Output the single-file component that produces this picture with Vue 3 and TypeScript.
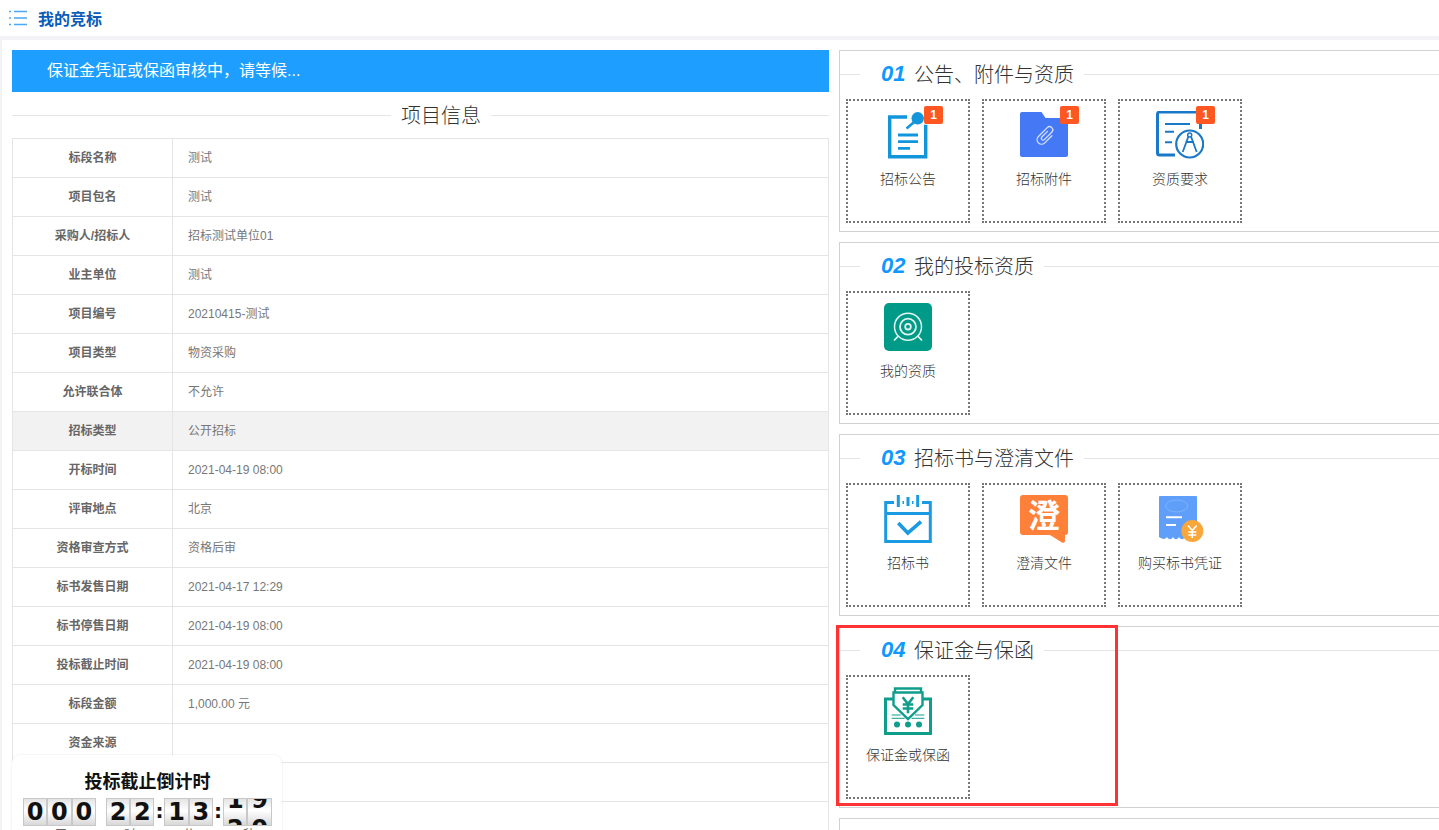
<script setup lang="ts">
interface Card { key: string; label: string; badge?: number }
interface Section { no: string; title: string; cards: Card[] }

const rows: [string, string][] = [
  ['标段名称', '测试'],
  ['项目包名', '测试'],
  ['采购人/招标人', '招标测试单位01'],
  ['业主单位', '测试'],
  ['项目编号', '20210415-测试'],
  ['项目类型', '物资采购'],
  ['允许联合体', '不允许'],
  ['招标类型', '公开招标'],
  ['开标时间', '2021-04-19 08:00'],
  ['评审地点', '北京'],
  ['资格审查方式', '资格后审'],
  ['标书发售日期', '2021-04-17 12:29'],
  ['标书停售日期', '2021-04-19 08:00'],
  ['投标截止时间', '2021-04-19 08:00'],
  ['标段金额', '1,000.00 元'],
  ['资金来源', ''],
  ['', ''],
  ['', ''],
]

const sections: Section[] = [
  {
    no: '01',
    title: '公告、附件与资质',
    cards: [
      { key: 'notice', label: '招标公告', badge: 1 },
      { key: 'attach', label: '招标附件', badge: 1 },
      { key: 'qualify', label: '资质要求', badge: 1 },
    ],
  },
  { no: '02', title: '我的投标资质', cards: [{ key: 'target', label: '我的资质' }] },
  {
    no: '03',
    title: '招标书与澄清文件',
    cards: [
      { key: 'book', label: '招标书' },
      { key: 'clarify', label: '澄清文件' },
      { key: 'receipt', label: '购买标书凭证' },
    ],
  },
  { no: '04', title: '保证金与保函', cards: [{ key: 'deposit', label: '保证金或保函' }] },
  { no: '05', title: '', cards: [] },
]

// 倒计时分组，最后一组的秒数正在翻动
const countdown = [
  { digits: ['0', '0', '0'], after: '' },
  { digits: ['2', '2'], after: ':' },
  { digits: ['1', '3'], after: ':' },
]
const rolling = [['1', '2'], ['9', '0']]
const units = ['天', '时', '分', '秒']
</script>

<template>
  <div class="page">
    <header class="topbar">
      <svg class="menu-icon" width="18" height="16" viewBox="0 0 18 16" fill="none" stroke="#4aa8f5" stroke-width="1.4">
        <path d="M0 1.5h2M5 1.5h13M0 8h2M5 8h13M0 14.5h2M5 14.5h13" />
      </svg>
      <span class="page-title">我的竞标</span>
    </header>

    <main class="main">
      <div class="left">
        <div class="banner">保证金凭证或保函审核中，请等候...</div>
        <div class="info-title">
          <i class="line-left"></i>
          <span>项目信息</span>
          <i class="line-right"></i>
        </div>
        <div class="info-table">
          <div v-for="(row, i) in rows" :key="i" class="info-row" :class="{ hover: row[0] === '招标类型' }">
            <div class="info-label">{{ row[0] }}</div>
            <div class="info-value">{{ row[1] }}</div>
          </div>
        </div>

        <div class="countdown">
          <div class="cd-title">投标截止倒计时</div>
          <div class="cd-digits">
            <template v-for="(group, g) in countdown" :key="g">
              <span v-for="(d, k) in group.digits" :key="k" class="cd-cell"><b>{{ d }}</b></span>
              <span class="cd-sep">{{ group.after }}</span>
            </template>
            <span v-for="(pair, k) in rolling" :key="'r' + k" class="cd-cell roll">
              <b v-for="d in pair" :key="d">{{ d }}</b>
            </span>
          </div>
          <div class="cd-units">
            <span v-for="u in units" :key="u">{{ u }}</span>
          </div>
        </div>
      </div>

      <div class="right">
        <section v-for="sec in sections" :key="sec.no" class="step">
          <div class="step-title">
            <i class="step-line short"></i>
            <em>{{ sec.no }}</em>
            <span>{{ sec.title }}</span>
            <i class="step-line"></i>
          </div>
          <div class="cards">
            <div v-for="card in sec.cards" :key="card.key" class="card">
              <span v-if="card.badge" class="badge">{{ card.badge }}</span>
              <svg class="card-icon" width="48" height="48" viewBox="0 0 48 48" fill="none">
                <g v-if="card.key === 'notice'" stroke="#1296db">
                  <path d="M23 6H5.700v39.800h36v-32" stroke-width="3.400" />
                  <path d="M14 24h20M14 30.700h20M14 37.300h12" stroke-width="2.800" />
                  <path d="M32 9.500l-9.500 8" stroke-width="2.600" />
                  <circle cx="33.700" cy="7.300" r="6.200" fill="#1296db" stroke="none" />
                </g>
                <g v-else-if="card.key === 'attach'">
                  <path d="M2 1h19.500l4 6H46a2 2 0 0 1 2 2v35a2 2 0 0 1-2 2H2a2 2 0 0 1-2-2V3a2 2 0 0 1 2-2z" fill="#4478f5" />
                  <path transform="rotate(45 25 25)" d="M23.500 20v8a1.800 1.800 0 0 0 3.600 0V17.500a3.200 3.200 0 0 0-6.400 0V30a4.500 4.500 0 0 0 9 0V20" stroke="#d5e1fd" stroke-width="1.300" stroke-linecap="round" />
                </g>
                <g v-else-if="card.key === 'qualify'" stroke="#1a78c8">
                  <path d="M19 44H3.500a2 2 0 0 1-2-2V3a2 2 0 0 1 2-2h39a2 2 0 0 1 2 2v15" stroke-width="3" />
                  <path d="M9 13h25M9 20.700h9M9 31.300h7" stroke-width="2" />
                  <circle cx="33.700" cy="33" r="13.500" fill="#fff" stroke-width="2.200" />
                  <path d="M33.700 22l-7 19M33.700 22l7 19M29.500 31h8.500" stroke-width="1.800" />
                  <circle cx="33.700" cy="24" r="2" fill="#fff" stroke-width="1.500" />
                </g>
                <g v-else-if="card.key === 'target'">
                  <rect width="48" height="48" rx="5" fill="#009b88" />
                  <g stroke="#e3f4f1" stroke-width="1.500">
                    <circle cx="24" cy="23.700" r="13.500" />
                    <circle cx="24" cy="23.700" r="8" stroke-width="1.800" />
                    <circle cx="24" cy="23.700" r="2.800" stroke-width="1.800" />
                    <path d="M14.300 33l-4.300 4.500M33.700 33l4.300 4.500" stroke-width="1.800" />
                  </g>
                </g>
                <g v-else-if="card.key === 'book'" stroke="#1a9ae0">
                  <path d="M10 7.500H1.700v39h44.600v-39H38M18.500 7.500h1.500M28 7.500h1.500M1.700 18.500h44.600" stroke-width="3" />
                  <path d="M14.300 0v12M24 2v9M33.700 0v12" stroke-width="3" />
                  <path d="M14.300 28l9.500 10L37 26.700" stroke-width="3.600" />
                </g>
                <g v-else-if="card.key === 'clarify'">
                  <path d="M3 0h42a3 3 0 0 1 3 3v34a3 3 0 0 1-3 3v6a2 2 0 0 1-3 1.500L30 40H3a3 3 0 0 1-3-3V3a3 3 0 0 1 3-3z" fill="#ff8038" />
                  <text x="24" y="32" text-anchor="middle" class="clarify-text">澄</text>
                </g>
                <g v-else-if="card.key === 'receipt'">
                  <path d="M3 2a1 1 0 0 1 1-1h36a1 1 0 0 1 1 1v40c-2 3-4 3-6 0-2 3-4 3-6 0-2 3-4 3-6 0-2 3-4 3-6 0-2 3-4 3-6 0-2 3-5 2-8 0z" fill="#5f9ff9" />
                  <ellipse cx="20.700" cy="11" rx="11" ry="6" stroke="#7fb2fa" stroke-width="1" />
                  <path d="M10 22.300h16M10 30h10" stroke="#fff" stroke-width="2" />
                  <circle cx="36.300" cy="36" r="11" fill="#f9a63a" />
                  <path d="M32 30.500l4.300 5 4.300-5M36.300 35.500V43M32.300 37h8M32.300 40h8" stroke="#fff" stroke-width="1.600" />
                </g>
                <g v-else-if="card.key === 'deposit'" stroke="#0f9d8c">
                  <path d="M9 12H1.500v34.500h45V12H39" stroke-width="3" />
                  <path d="M11 5V1.500h26V5" stroke-width="2.400" />
                  <path d="M9.500 5.500h29V18L24 32 9.500 18z" stroke-width="2.400" fill="#fff" />
                  <path d="M18.700 10.300l5.300 6.700 5.300-6.700M24 17v9.300M18.700 17.500h10.600M18.700 21.500h10.600" stroke-width="2.600" />
                  <path d="M7.700 28h9M7.700 31.300h13M31 28h9.300M27.700 31.300h12.600" stroke-width="1" />
                  <g fill="#0f9d8c" stroke="none">
                    <circle cx="13" cy="37.500" r="3" />
                    <circle cx="24" cy="37.500" r="3" />
                    <circle cx="35" cy="37.500" r="3" />
                  </g>
                </g>
              </svg>
              <div class="card-label">{{ card.label }}</div>
            </div>
          </div>
          <div v-if="sec.no === '04'" class="red-box"></div>
        </section>
      </div>
    </main>
  </div>
</template>

<style>
html,
body {
  margin: 0;
  overflow: hidden;
  background: #fff;
}
</style>

<style scoped>
.page {
  width: 1439px;
  height: 830px;
  overflow: hidden;
  background: #f2f2f7;
  font-family: "Liberation Sans", "Noto Sans CJK SC", sans-serif;
}

/* 顶部标题 */
.topbar {
  height: 36px;
  box-sizing: border-box;
  padding-left: 9px;
  display: flex;
  align-items: center;
  background: #fff;
}

.menu-icon {
  margin-right: 11px;
}

.page-title {
  font-size: 16px;
  font-weight: 700;
  color: #0b5cb8;
}

.main {
  margin: 4px 0 0 2px;
  height: 790px;
  padding: 10px 0 0 10px;
  box-sizing: border-box;
  background: #fff;
  display: flex;
  gap: 10px;
}

/* 左侧项目信息 */
.left {
  position: relative;
  flex: 0 0 817px;
}

.banner {
  height: 42px;
  line-height: 42px;
  padding-left: 35px;
  background: #1e9fff;
  color: #fff;
  font-size: 16px;
}

.info-title {
  height: 46px;
  display: flex;
  align-items: center;
  gap: 10px;
  font-size: 20px;
  font-weight: 300;
  color: #333;
}

.info-title span {
  padding-bottom: 2px;
}

.info-title i {
  height: 1px;
  background: #e5e5e5;
}

.line-left {
  width: 379px;
}

.line-right {
  flex: 1;
}

.info-table {
  border-top: 1px solid #e5e5e5;
  border-left: 1px solid #e5e5e5;
  border-right: 1px solid #e5e5e5;
  font-size: 12px;
  color: #666;
}

.info-row {
  height: 39px;
  box-sizing: border-box;
  display: flex;
  border-bottom: 1px solid #e5e5e5;
}

.info-row.hover {
  background: #f2f2f2;
}

.info-label {
  width: 159px;
  flex: none;
  line-height: 38px;
  text-align: center;
  font-weight: 700;
  border-right: 1px solid #e5e5e5;
}

.info-value {
  padding-left: 15px;
  line-height: 38px;
  color: #777;
}

/* 倒计时浮层 */
.countdown {
  position: absolute;
  left: 0;
  top: 705px;
  width: 270px;
  height: 90px;
  overflow: hidden;
  box-sizing: border-box;
  padding: 15px 0 0 11px;
  background: #fff;
  border-radius: 8px;
  box-shadow: 0 0 2px rgba(0, 0, 0, 0.12);
}

.cd-title {
  width: 249px;
  line-height: 24px;
  text-align: center;
  font-size: 18px;
  font-weight: 700;
  color: #111;
}

.cd-digits {
  margin-top: 4px;
  display: flex;
  height: 28px;
}

.cd-cell {
  width: 24.3px;
  height: 28px;
  box-sizing: border-box;
  overflow: hidden;
  border: 1px solid #c8c8c8;
  background: linear-gradient(#e4e4e4, #ffffff 45%, #d8d8d8);
  font-family: "DejaVu Sans", sans-serif;
  font-size: 24px;
  text-align: center;
  color: #111;
}

.cd-cell b {
  display: block;
  height: 26px;
  line-height: 26px;
}

.cd-cell.roll b:first-child {
  margin-top: -12px;
}

.cd-cell.roll b + b {
  margin-top: 3px;
}

.cd-sep {
  width: 10px;
  line-height: 27px;
  text-align: center;
  font-family: "DejaVu Sans", sans-serif;
  font-size: 20px;
  font-weight: 700;
  color: #111;
}

.cd-units {
  margin-top: 2px;
  height: 14px;
  padding-left: 32px;
  font-size: 12px;
  line-height: 14px;
  color: #666;
  display: grid;
  grid-template-columns: 69px 59px 60px 12px;
}

/* 右侧步骤 */
.right {
  flex: 0 0 610px;
  display: flex;
  flex-direction: column;
  gap: 10px;
}

.step {
  position: relative;
  flex: none;
  height: 182px;
  box-sizing: border-box;
  border: 1px solid #d2d2d2;
  padding: 0 6px;
}

.step-title {
  height: 47px;
  margin: 0 -6px 1px;
  display: flex;
  align-items: center;
  color: #333;
  font-size: 20px;
  font-weight: 300;
}

.step-title span {
  padding-bottom: 3px;
}

.step-title em {
  margin-left: 21px;
  width: 33px;
  padding-bottom: 1px;
  font-size: 22px;
  font-weight: 700;
  font-style: italic;
  color: #1098ff;
}

.step-line {
  flex: 1;
  height: 1px;
  margin-left: 10px;
  background: #e5e5e5;
}

.step-line.short {
  flex: 0 0 20px;
  margin-left: 0;
}

.cards {
  display: flex;
  gap: 12px;
}

.card {
  position: relative;
  width: 124px;
  height: 124px;
  box-sizing: border-box;
  padding-top: 10px;
  border: 2px dotted #777;
  text-align: center;
}

.card-icon {
  display: block;
  margin: 0 auto;
}

.card-label {
  margin-top: 10px;
  font-size: 14px;
  line-height: 20px;
  font-weight: 300;
  color: #333;
}

.badge {
  position: absolute;
  top: 5px;
  left: 76px;
  width: 19px;
  height: 18px;
  border-radius: 2px;
  background: #ff5722;
  color: #fff;
  font-size: 12px;
  font-weight: 700;
  line-height: 18px;
}

.clarify-text {
  fill: #fff;
  font-family: "Noto Sans CJK SC", sans-serif;
  font-size: 32px;
  font-weight: 700;
}

/* 红色标注框 */
.red-box {
  position: absolute;
  left: -4px;
  top: -2px;
  width: 282px;
  height: 181px;
  box-sizing: border-box;
  border: 3px solid #f33;
}
</style>
